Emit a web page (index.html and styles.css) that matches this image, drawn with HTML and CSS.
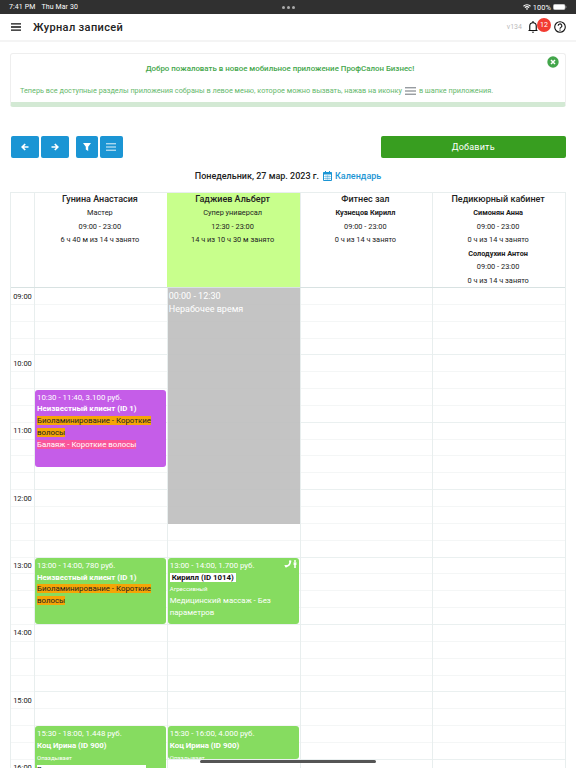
FILE: index.html
```html
<!DOCTYPE html>
<html lang="ru">

<head>
	<meta charset="UTF-8" />
	<meta name="viewport" content="width=device-width, initial-scale=1.0" />
	<title>Журнал записей</title>
	<link rel="stylesheet" href="styles.css">
</head>

<body>
	<div class="status-bar">
		<div class="status-left"><span>7:41 PM</span><span>Thu Mar 30</span></div>
		<div class="status-dots"><i></i><i></i><i></i></div>
		<div class="status-right">
			<svg width="8" height="6" viewBox="0 0 16 12" fill="none" stroke="#fff" stroke-width="2.2"><path d="M1 4.5a10 10 0 0 1 14 0M3.8 7.4a6 6 0 0 1 8.4 0"/><path d="M8 12L5.6 9.5a3.4 3.4 0 0 1 4.8 0z" fill="#fff" stroke="none"/></svg>
			<span>100%</span>
			<svg width="14" height="6" viewBox="0 0 14 6"><rect x=".3" y=".3" width="11.8" height="5.4" rx="1.6" fill="#fff" stroke="#bbb" stroke-width=".6"/><path d="M12.8 2v2q.8-.3.8-1t-.8-1" fill="#aaa"/></svg>
		</div>
	</div>

	<header class="header">
		<svg class="menu-icon" width="10" height="8" viewBox="0 0 10 8"><path d="M0 .8h10M0 4h10M0 7.2h10" stroke="#111" stroke-width="1.3"/></svg>
		<h1>Журнал записей</h1>
		<span class="version">v134</span>
		<div class="bell">
			<svg width="10" height="12" viewBox="0 0 20 24" fill="none" stroke="#111" stroke-width="2.3"><path d="M1 19h18M3.5 19v-9a6.5 6.5 0 0 1 13 0v9"/><path d="M10 .5v3" stroke-width="3"/><path d="M7.5 21.3h5q-.4 2.2-2.5 2.2t-2.5-2.2" fill="#111" stroke="none"/></svg>
			<span class="badge">12</span>
		</div>
		<svg width="12" height="12" viewBox="0 0 24 24" fill="none" stroke="#111" stroke-width="2.2"><circle cx="12" cy="12" r="10.6"/><path d="M8.3 9.6a3.7 3.7 0 1 1 5.6 3.1Q12 13.8 12 15.5"/><path d="M12 17v2.4"/></svg>
	</header>

	<!-- welcome message -->
	<div class="notice">
		<svg class="notice-close" width="12" height="12" viewBox="0 0 12 12"><circle cx="6" cy="6" r="5.7" fill="#43a64b"/><path d="M4 4l4 4M8 4L4 8" stroke="#fff" stroke-width="1.5"/></svg>
		<div class="notice-title">Добро пожаловать в новое мобильное приложение ПрофСалон Бизнес!</div>
		<div class="notice-text">
			<span>Теперь все доступные разделы приложения собраны в левое меню, которое можно вызвать, нажав на иконку</span>
			<svg width="11" height="8" viewBox="0 0 11 8"><path d="M0 .8h11M0 4h11M0 7.2h11" stroke="#6c7379" stroke-width="1"/></svg>
			<span>в шапке приложения.</span>
		</div>
	</div>

	<div class="toolbar">
		<button class="btn btn-prev"><svg width="8" height="8" viewBox="0 0 8 8"><path d="M7.5 4H1.4M4.2 1L1.2 4l3 3" /></svg></button>
		<button class="btn btn-next"><svg width="8" height="8" viewBox="0 0 8 8"><path d="M.5 4h6.1M3.8 1l3 3-3 3" /></svg></button>
		<button class="btn btn-small"><svg width="8" height="8" viewBox="0 0 8 8"><path d="M0 0h8L5.2 3.7V8L2.8 6.5V3.7z" class="solid"/></svg></button>
		<button class="btn btn-small"><svg width="10" height="8" viewBox="0 0 10 8"><path d="M0 .8h10M0 4h10M0 7.2h10" class="thin"/></svg></button>
		<button class="btn btn-add">Добавить</button>
	</div>

	<div class="date-line">
		<span>Понедельник, 27 мар. 2023 г.</span>
		<a class="calendar-link">
			<svg width="9" height="10" viewBox="0 0 9 10"><path d="M.5 1.5h8v8h-8z" fill="none" stroke="#1b95d4" stroke-width="1"/><path d="M.5 1.2h8v2.2h-8zM2 0h1v2H2zM6 0h1v2H6z" fill="#1b95d4"/><path d="M1 5.5h7M1 7.5h7M3 4v5M4.5 4v5M6 4v5" stroke="#1b95d4" stroke-width=".4"/></svg>
			<span>Календарь</span>
		</a>
	</div>

	<div class="journal">
		<div class="journal-head">
			<div class="head-cell"></div>
			<div class="head-cell">
				<h2>Гунина Анастасия</h2>
				<p>Мастер</p>
				<p>09:00 - 23:00</p>
				<p>6 ч 40 м из 14 ч занято</p>
			</div>
			<div class="head-cell selected">
				<h2>Гаджиев Альберт</h2>
				<p>Супер универсал</p>
				<p>12:30 - 23:00</p>
				<p>14 ч из 10 ч 30 м занято</p>
			</div>
			<div class="head-cell">
				<h2>Фитнес зал</h2>
				<p><b>Кузнецов Кирилл</b></p>
				<p>09:00 - 23:00</p>
				<p>0 ч из 14 ч занято</p>
			</div>
			<div class="head-cell">
				<h2>Педикюрный кабинет</h2>
				<p><b>Симонян Анна</b></p>
				<p>09:00 - 23:00</p>
				<p>0 ч из 14 ч занято</p>
				<p><b>Солодухин Антон</b></p>
				<p>09:00 - 23:00</p>
				<p>0 ч из 14 ч занято</p>
			</div>
		</div>

		<!-- one grid row = 5 minutes, row 1 is 09:00 -->
		<div class="journal-body">
			<div class="times">
				<span>09:00</span><span>10:00</span><span>11:00</span><span>12:00</span><span>13:00</span><span>14:00</span><span>15:00</span><span>16:00</span>
			</div>
			<div class="column">
				<div class="event purple" style="grid-row: 19 / 33">
					<div>10:30 - 11:40, 3.100 руб.</div>
					<div class="client">Неизвестный клиент (ID 1)</div>
					<div><mark class="orange">Биоламинирование - Короткие волосы</mark></div>
					<div><mark class="pink">Балаяж - Короткие волосы</mark></div>
				</div>
				<div class="event green" style="grid-row: 49 / 61">
					<div>13:00 - 14:00, 780 руб.</div>
					<div class="client">Неизвестный клиент (ID 1)</div>
					<div><mark class="orange">Биоламинирование - Короткие волосы</mark></div>
				</div>
				<div class="event green" style="grid-row: 79 / 109">
					<div>15:30 - 18:00, 1.448 руб.</div>
					<div class="client">Коц Ирина (ID 900)</div>
					<div class="note">Опаздывает</div>
					<div class="service">В</div>
				</div>
			</div>
			<div class="column">
				<div class="closed" style="grid-row: 1 / 43">00:00 - 12:30<br>Нерабочее время</div>
				<div class="event green" style="grid-row: 49 / 61">
					<div class="event-top">
						<span>13:00 - 14:00, 1.700 руб.</span>
						<svg width="13" height="8" viewBox="0 0 13 8"><path d="M1.2 6.3Q5.8 6.3 6.4 1.5" fill="none" stroke="#fff" stroke-width="1.7"/><path d="M.2 5.3l2.4-.3.8 1.5-1.3 1.2zM5 2.3L5.3.2l2 .3-.3 2.3z" fill="#fff"/><circle cx="11" cy="1" r="1" fill="#fff"/><path d="M9.6 2.3h2.8v2.7h-.6V8h-1.6V5h-.6z" fill="#fff"/></svg>
					</div>
					<div class="client"><mark class="label">Кирилл (ID 1014)</mark></div>
					<div class="note">Агрессивный</div>
					<div>Медицинский массаж - Без параметров</div>
				</div>
				<div class="event green" style="grid-row: 79 / 85">
					<div>15:30 - 16:00, 4.000 руб.</div>
					<div class="client">Коц Ирина (ID 900)</div>
					<div class="note">Опаздывает</div>
				</div>
			</div>
			<div class="column"></div>
			<div class="column"></div>
		</div>
	</div>
	<div class="home-indicator"></div>
</body>

</html>
```
FILE: styles.css
```css
* {
	box-sizing: border-box;
}

body {
	display: flex;
	flex-direction: column;
	margin: 0;
	height: 100vh;
	overflow: hidden;
	background: #fff;
	color: #222;
	font-family: Roboto, "Liberation Sans", sans-serif;
	font-size: 8px;
}

h1, h2, p {
	margin: 0;
}

svg {
	display: block;
	flex: none;
}

.status-bar {
	display: grid;
	grid-template-columns: 1fr auto 1fr;
	align-items: center;
	height: 14px;
	padding: 0 9px;
	background: #303030;
	color: #fff;
	font-size: 7px;
	letter-spacing: 0.1px;
}

.status-left {
	display: flex;
	gap: 6px;
}

.status-dots {
	display: flex;
	gap: 2px;
}

.status-dots i {
	width: 3px;
	height: 3px;
	border-radius: 50%;
	background: #aaa;
}

.status-right {
	display: flex;
	justify-content: flex-end;
	align-items: center;
	gap: 2px;
	font-size: 7.4px;
}

.header {
	display: flex;
	align-items: center;
	height: 28px;
	padding: 0 10px 0 11px;
	border-bottom: 2px solid #f4f4f4;
}

.header h1 {
	margin-left: 12px;
	font-size: 11px;
	font-weight: 500;
	letter-spacing: 0.35px;
}

.version {
	margin-left: auto;
	margin-right: 6px;
	color: #bbb;
	font-size: 7px;
}

.bell {
	position: relative;
	margin-right: 16px;
}

.badge {
	position: absolute;
	left: 9px;
	top: -3px;
	width: 14px;
	height: 14px;
	border-radius: 50%;
	background: #f23c32;
	color: #fff;
	font-size: 7px;
	line-height: 14px;
	text-align: center;
}

.notice {
	position: relative;
	height: 54px;
	margin: 11px 10px 0;
	padding-top: 9px;
	border: 1px solid #eee;
	border-bottom: 5px solid #d3e9d4;
	border-radius: 3px;
	color: #43a64b;
}

.notice-close {
	position: absolute;
	right: 6px;
	top: 2px;
}

.notice-title {
	padding-right: 16px;
	font-size: 7.9px;
	font-weight: 500;
	line-height: 12px;
	text-align: center;
}

.notice-text {
	display: flex;
	align-items: center;
	gap: 3px;
	margin: 10px 0 0 9px;
	font-size: 7.3px;
	line-height: 12px;
	white-space: nowrap;
	color: #66b86c;
}

.toolbar {
	display: flex;
	height: 22px;
	margin: 29px 10px 0 10.5px;
}

.btn {
	display: flex;
	align-items: center;
	justify-content: center;
	padding: 0;
	border: none;
	border-radius: 2px;
	background: #1b95d4;
	color: #fff;
	font-family: inherit;
}

.btn path {
	fill: none;
	stroke: #fff;
	stroke-width: 1.7;
}

.btn .solid {
	fill: #fff;
	stroke: none;
}

.btn .thin {
	stroke-width: 0.9;
}

.btn-prev, .btn-next {
	width: 28px;
	margin-right: 2px;
}

.btn-next {
	margin-right: 7px;
}

.btn-small {
	width: 22.5px;
	margin-right: 2px;
}

.btn-add {
	width: 185.5px;
	margin-left: auto;
	background: #389e20;
	font-size: 9px;
	letter-spacing: 0.2px;
}

.date-line {
	display: flex;
	justify-content: center;
	align-items: center;
	gap: 4px;
	height: 34px;
	padding-top: 1px;
	font-size: 9px;
	font-weight: 500;
}

.calendar-link {
	display: flex;
	align-items: center;
	gap: 3px;
	color: #1b95d4;
}

.journal {
	display: flex;
	flex-direction: column;
	flex: 1;
	min-height: 0;
	margin: 0 10px;
	border: 1px solid #e8eeee;
	border-bottom: none;
}

.journal-head, .journal-body {
	display: grid;
	grid-template-columns: 23px repeat(4, 1fr);
}

.journal-head {
	flex: none;
	height: 95px;
	border-bottom: 1px solid #d8e2e2;
}

.head-cell {
	padding-right: 2px;
	border-left: 1px solid #e8eeee;
	text-align: center;
}

.head-cell:first-child {
	border-left: none;
}

.head-cell.selected {
	background: #c8ff8c;
	border-color: #c8ff8c;
}

.head-cell h2 {
	font-size: 9px;
	font-weight: 500;
	line-height: 13px;
}

.head-cell p {
	font-size: 7.4px;
	line-height: 13.5px;
}

.head-cell b {
	font-weight: 700;
	font-size: 7.3px;
}

.journal-body {
	flex: 1;
	min-height: 0;
	overflow: hidden;
	background: repeating-linear-gradient(#fff 0 15.85px, #f4f6f6 15.85px 16.85px);
}

.times {
	display: grid;
	grid-auto-rows: 67.4px;
	padding-top: 2.5px;
	text-align: center;
	font-size: 7.5px;
	line-height: 11px;
}

.column {
	display: grid;
	grid-template-rows: repeat(108, 5.617px);
	min-width: 0;
	border-left: 1px solid #e8eeee;
	background: repeating-linear-gradient(transparent 0 66.4px, #eaf0f0 66.4px 67.4px);
}

.closed {
	background: rgba(190, 190, 190, 0.9);
	color: #fff;
	padding: 1.5px 1px;
	font-size: 9px;
	line-height: 13.5px;
}

.event {
	min-width: 0;
	margin: 0.6px 1px 0.4px 0;
	padding: 2px 2px 0;
	border-radius: 3px;
	overflow: hidden;
	color: #fff;
	font-size: 7.85px;
	line-height: 11.8px;
}

.purple {
	background: #c55de8;
}

.green {
	background: #86dc60;
}

.client {
	font-weight: 700;
}

.note {
	font-size: 6px;
}

.service {
	width: 109px;
	margin-top: 1px;
	background: #fff;
	color: #222;
	line-height: 9px;
}

.event-top {
	display: flex;
	justify-content: space-between;
}

mark {
	background: none;
	color: inherit;
}

mark.orange {
	background: #f5a506;
	color: #222;
}

mark.pink {
	background: #f9559b;
}

mark.label {
	padding: 0 2px;
	background: #fff;
	color: #111;
}

.home-indicator {
	position: fixed;
	left: 200px;
	bottom: 5px;
	width: 176px;
	height: 3px;
	border-radius: 2px;
	background: #555;
}
```
